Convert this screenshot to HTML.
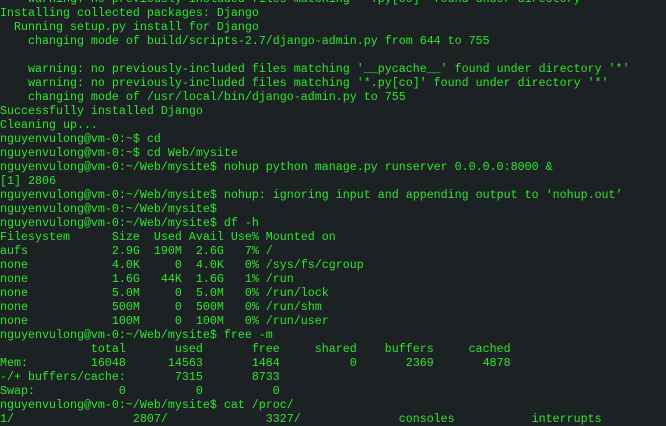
<!DOCTYPE html>
<html><head><meta charset="utf-8"><style>
html,body{margin:0;padding:0;background:#1c2124;width:666px;height:417px;overflow:hidden}
pre{margin:0;position:absolute;left:0;top:-8px;font-family:"Liberation Mono","DejaVu Sans Mono",monospace;font-size:11.67px;line-height:14px;color:#2ee62e;white-space:pre}
</style></head><body><pre>    warning: no previously-included files matching '*.py[co]' found under directory
Installing collected packages: Django
  Running setup.py install for Django
    changing mode of build/scripts-2.7/django-admin.py from 644 to 755

    warning: no previously-included files matching '__pycache__' found under directory '*'
    warning: no previously-included files matching '*.py[co]' found under directory '*'
    changing mode of /usr/local/bin/django-admin.py to 755
Successfully installed Django
Cleaning up...
nguyenvulong@vm-0:~$ cd
nguyenvulong@vm-0:~$ cd Web/mysite
nguyenvulong@vm-0:~/Web/mysite$ nohup python manage.py runserver 0.0.0.0:8000 &
[1] 2806
nguyenvulong@vm-0:~/Web/mysite$ nohup: ignoring input and appending output to ‘nohup.out’
nguyenvulong@vm-0:~/Web/mysite$
nguyenvulong@vm-0:~/Web/mysite$ df -h
Filesystem      Size  Used Avail Use% Mounted on
aufs            2.9G  190M  2.6G   7% /
none            4.0K     0  4.0K   0% /sys/fs/cgroup
none            1.6G   44K  1.6G   1% /run
none            5.0M     0  5.0M   0% /run/lock
none            500M     0  500M   0% /run/shm
none            100M     0  100M   0% /run/user
nguyenvulong@vm-0:~/Web/mysite$ free -m
             total       used       free     shared    buffers     cached
Mem:         16048      14563       1484          0       2369       4878
-/+ buffers/cache:       7315       8733
Swap:            0          0          0
nguyenvulong@vm-0:~/Web/mysite$ cat /proc/
1/                 2807/              3327/              consoles           interrupts
</pre></body></html>
